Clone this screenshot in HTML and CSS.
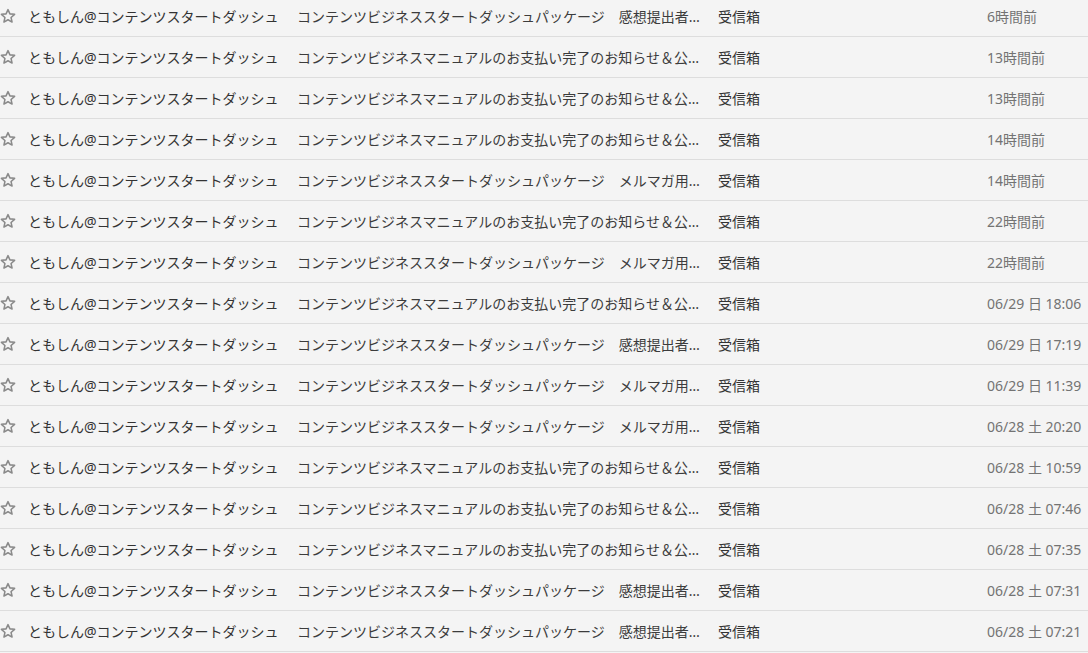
FILE: index.html
```html
<!DOCTYPE html>
<html lang="ja">
  <head>
    <meta charset="UTF-8" />
    <meta name="viewport" content="width=device-width, initial-scale=1.0" />
    <title>受信箱</title>
    <link rel="stylesheet" href="styles.css">
  </head>
  <body>
    <ul class="mail-list" id="mailList"></ul>

    <script>
      const sender = "ともしん@コンテンツスタートダッシュ";
      const packageSubject = "コンテンツビジネススタートダッシュパッケージ";
      const manualSubject = "コンテンツビジネスマニュアルのお支払い完了のお知らせ＆公式LINE登録のお願い";

      const mails = [
        { subject: packageSubject, snippet: "感想提出者様へのご案内", date: "6時間前" },
        { subject: manualSubject, snippet: "", date: "13時間前" },
        { subject: manualSubject, snippet: "", date: "13時間前" },
        { subject: manualSubject, snippet: "", date: "14時間前" },
        { subject: packageSubject, snippet: "メルマガ用のご案内", date: "14時間前" },
        { subject: manualSubject, snippet: "", date: "22時間前" },
        { subject: packageSubject, snippet: "メルマガ用のご案内", date: "22時間前" },
        { subject: manualSubject, snippet: "", date: "06/29 日 18:06" },
        { subject: packageSubject, snippet: "感想提出者様へのご案内", date: "06/29 日 17:19" },
        { subject: packageSubject, snippet: "メルマガ用のご案内", date: "06/29 日 11:39" },
        { subject: packageSubject, snippet: "メルマガ用のご案内", date: "06/28 土 20:20" },
        { subject: manualSubject, snippet: "", date: "06/28 土 10:59" },
        { subject: manualSubject, snippet: "", date: "06/28 土 07:46" },
        { subject: manualSubject, snippet: "", date: "06/28 土 07:35" },
        { subject: packageSubject, snippet: "感想提出者様へのご案内", date: "06/28 土 07:31" },
        { subject: packageSubject, snippet: "感想提出者様へのご案内", date: "06/28 土 07:21" },
      ];

      const list = document.getElementById("mailList");

      mails.forEach((mail) => {
        const row = document.createElement("li");
        row.className = "mail-row";
        const snippet = mail.snippet ? "\u3000" + mail.snippet : "";
        row.innerHTML = `
          <span class="star">
            <svg width="16" height="16" viewBox="0 0 24 24">
              <path d="M12 2.4l2.9 6.4 7 .7-5.3 4.7 1.5 6.9L12 17.6 5.9 21.1l1.5-6.9-5.3-4.7 7-.7z"
                fill="none" stroke="#8a8a8a" stroke-width="2.3" stroke-linejoin="round" />
            </svg>
          </span>
          <span class="sender">${sender}</span>
          <span class="subject">${mail.subject}${snippet}</span>
          <span class="label">受信箱</span>
          <span class="date">${mail.date}</span>
        `;
        list.appendChild(row);
      });
    </script>
  </body>
</html>
```

FILE: styles.css
```css
* {
  margin: 0;
  padding: 0;
  box-sizing: border-box;
}

body {
  font-family: "Noto Sans", "Noto Sans CJK JP", sans-serif;
  font-size: 14px;
  background: #f4f4f4;
  color: #333;
  overflow: hidden;
}

.mail-list {
  list-style: none;
  margin-top: -4px;
}

.mail-row {
  display: grid;
  grid-template-columns: 28px 269px 421px 269px 1fr;
  align-items: center;
  height: 41px;
  border-bottom: 1px solid #dddddd;
  white-space: nowrap;
}

.star {
  display: flex;
  align-items: center;
}

.sender {
  color: #333;
  overflow: hidden;
}

.subject {
  color: #3c3c3c;
  overflow: hidden;
  text-overflow: ellipsis;
  padding-right: 16px;
}

.label {
  color: #333;
}

.date {
  color: #737373;
}
```
